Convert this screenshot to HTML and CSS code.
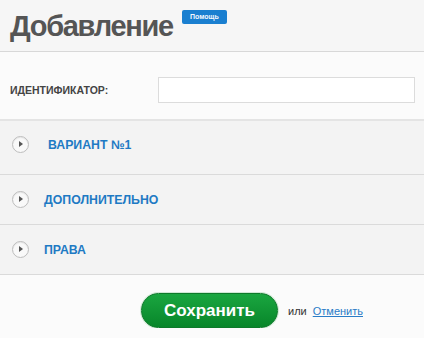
FILE: index.html
```html
<!DOCTYPE html>
<html lang="ru">
<head>
    <meta charset="UTF-8">
    <title>Добавление</title>
    <link rel="stylesheet" href="styles.css">
</head>
<body>
    <div class="header">
        <h1>Добавление</h1>
        <a href="#" class="help-btn">Помощь</a>
    </div>

    <div class="form-row">
        <label for="ident">Идентификатор:</label>
        <input type="text" id="ident">
    </div>

    <div class="section first">
        <span class="toggle"></span>
        <a href="#" class="section-title">Вариант №1</a>
    </div>
    <div class="section">
        <span class="toggle"></span>
        <a href="#" class="section-title">Дополнительно</a>
    </div>
    <div class="section last">
        <span class="toggle"></span>
        <a href="#" class="section-title">Права</a>
    </div>

    <div class="actions">
        <button class="save-btn">Сохранить</button>
        <span class="or">или</span>
        <a href="#" class="cancel">Отменить</a>
    </div>
</body>
</html>
```

FILE: styles.css
```css
body {
    margin: 0;
    font-family: "Liberation Sans", Arial, sans-serif;
    background-color: #fbfbfb;
    color: #444;
}

.header {
    display: flex;
    align-items: flex-start;
    height: 51px;
    padding: 0 10px;
    background-color: #f6f6f6;
    border-bottom: 1px solid #d8d8d8;
}

h1 {
    margin: 10px 0 0 0;
    font-size: 29px;
    font-weight: bold;
    color: #555;
    letter-spacing: -1.3px;
}

.help-btn {
    margin: 10px 0 0 9px;
    width: 45px;
    height: 14px;
    line-height: 14px;
    text-align: center;
    background-color: #1a7fd0;
    border-radius: 2px;
    color: #f4f8ff;
    font-size: 7px;
    font-weight: bold;
    text-decoration: none;
}

.form-row {
    display: flex;
    align-items: center;
    height: 59px;
    padding: 8px 9px 0 10px;
    background-color: #fbfbfb;
    border-bottom: 2px solid #e4e4e4;
}

.form-row label {
    width: 148px;
    font-size: 10.5px;
    font-weight: bold;
    text-transform: uppercase;
    color: #444;
}

.form-row input {
    flex: 1;
    height: 24px;
    padding: 0 4px;
    border: 1px solid #dcdcdc;
    background: white;
}

.section {
    display: flex;
    align-items: center;
    height: 49px;
    padding-left: 12px;
    background-color: #f3f3f3;
    border-bottom: 1px solid #dadada;
}

.section.first {
    height: 47px;
    padding-bottom: 6px;
}

.section.first .section-title {
    margin-left: 19px;
}

.toggle {
    position: relative;
    width: 15px;
    height: 15px;
    border: 1px solid #bdbdbd;
    border-radius: 50%;
    background: #f9f9f9;
    box-shadow: inset 0 1px 1px rgba(0,0,0,0.08);
}

/* small arrow inside the circle */
.toggle::after {
    content: "";
    position: absolute;
    left: 6px;
    top: 4px;
    border-left: 4px solid #555;
    border-top: 3.5px solid transparent;
    border-bottom: 3.5px solid transparent;
}

.section-title {
    margin-left: 15px;
    font-size: 12.3px;
    font-weight: bold;
    text-transform: uppercase;
    color: #1e7ac4;
    text-decoration: none;
}

.actions {
    display: flex;
    align-items: center;
    padding: 18px 0 0 141px;
}

.save-btn {
    width: 137px;
    height: 35px;
    border: 1px solid #0d7a2a;
    border-radius: 18px;
    background: linear-gradient(#1aa640, #08862a);
    box-shadow: 0 0 0 1px #cfe8d4;
    color: white;
    font-family: "Liberation Sans", Arial, sans-serif;
    font-size: 17px;
    font-weight: bold;
    cursor: pointer;
}

.or {
    margin-left: 10px;
    font-size: 11px;
    color: #333;
}

.cancel {
    margin-left: 6px;
    font-size: 11px;
    color: #2a7cc7;
}
```
